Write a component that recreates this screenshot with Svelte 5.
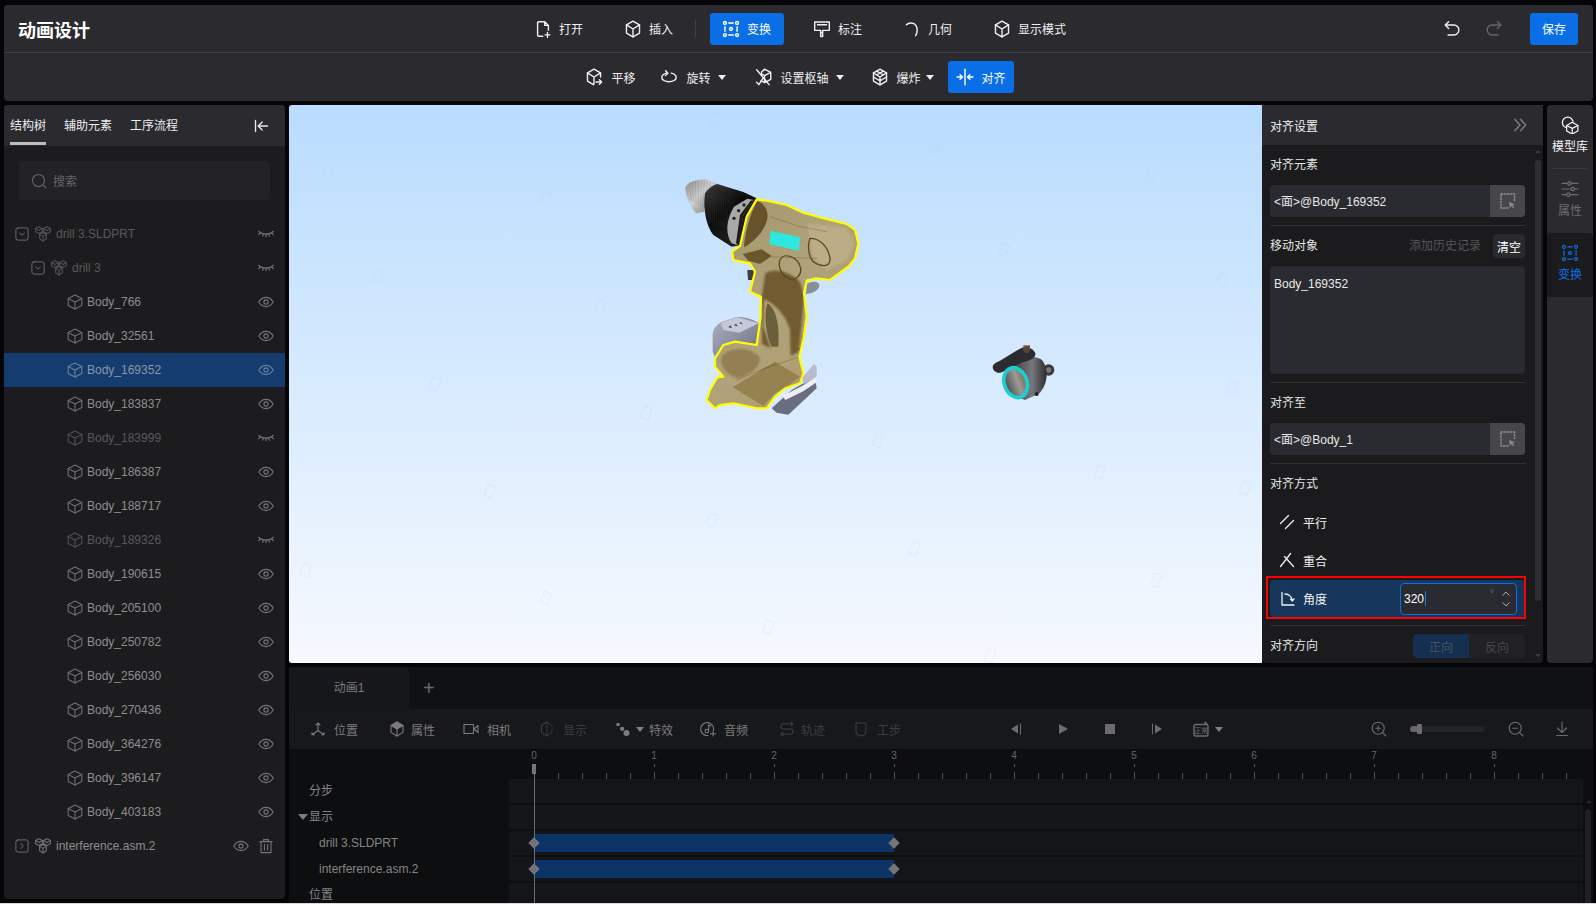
<script>
  const cube = '<path d="M8 1 14.8 4.6v6.8L8 15 1.2 11.4V4.6z"/><path d="M1.2 4.6 8 8l6.8-3.4M8 8v7"/>';
  const I = {
    open: '<path d="M9.5 1.5H4.2a1 1 0 0 0-1 1v11a1 1 0 0 0 1 1h3.6"/><path d="M9.5 1.5l3.3 3.3V9M9.5 1.5v3.3h3.3M12 11v4.4M9.8 13.2h4.4"/>',
    cube,
    insert: '<path d="M8 1 13.8 4.4v7.2L8 15l-5.8-3.4V4.4z"/><path d="M2.2 4.4 8 8l5.8-3.6M8 8v7"/>',
    transform: '<circle cx="2.6" cy="2.6" r="1.3"/><circle cx="13.4" cy="2.6" r="1.3"/><circle cx="2.6" cy="13.4" r="1.3"/><circle cx="13.4" cy="13.4" r="1.3"/><circle cx="8" cy="8" r="1.3"/><path d="M6 2.6h4M6 13.4h4M2.6 6v4M13.4 6v4"/>',
    mark: '<path d="M1.5 1.8h13v7.4H8.6v2.2H6.8v3.2H8.6v-3.2M1.5 1.8v7.4h5.3v2.2M4 4.2h8"/>',
    arc: '<path d="M3 4.2C5 2.2 9.6 1.8 11.6 5c1.5 2.4 1.2 6.4-.4 9"/>',
    undo: '<path d="M5 1.5 2 4.5l3 3"/><path d="M2.5 4.5h7.2a4.4 4.4 0 0 1 0 8.8H4.5"/>',
    redo: '<path d="M11 1.5 14 4.5l-3 3"/><path d="M13.5 4.5H6.3a4.4 4.4 0 0 0 0 8.8h5.2"/>',
    move: '<path d="M13.8 8V4.4L8 1 2.2 4.4v7.2L7.5 14.8"/><path d="M2.2 4.4 8 8l5.8-3.6M8 8v6.5"/><path d="M9.8 12.5h5M12.8 10.5l2 2-2 2"/>',
    rotate: '<path d="M5.8 4.6C3.4 5.2 1.6 6.6 1.6 8.4c0 2.2 2.9 3.8 6.4 3.8s6.4-1.6 6.4-3.8c0-1.8-1.9-3.2-4.4-3.8"/><path d="M5 2.4 7 4.6 4.8 6.6"/>',
    pivot: '<path d="M8.5 1 14 3.8v6.4L8.5 13 5.5 11.4M8.5 6.8 14 3.8M8.5 6.8V13M8.5 6.8 5.8 5.4V3.6L8.5 1"/><path d="M1.5 1.5l11 13.3M1.4 12.6l2 2.2L7.2 9"/>',
    explode: '<path d="M8 1 13.8 4.4v7.2L8 15l-5.8-3.4V4.4z"/><path d="M2.2 4.4 8 8l5.8-3.6M8 8v7M5 2.8 11 6.2M11 2.8 5 6.2M2.2 8 8 11.4 13.8 8"/>',
    align: '<path d="M8 1v14M1 8h4.4M3.6 6 5.8 8 3.6 10M15 8h-4.4M12.4 6 10.2 8l2.2 2"/>',
    collapse: '<path d="M2.5 2.5v11M14.5 8H5.5M9.2 4 5.2 8l4 4"/>',
    search: '<circle cx="7.5" cy="7.5" r="6"/><path d="M11.8 11.8 15 15"/>',
    down: '<rect x="1" y="1" width="14" height="14" rx="2.5"/><path d="M5.2 6.8 8 9.4l2.8-2.6"/>',
    right: '<rect x="1" y="1" width="14" height="14" rx="2.5"/><path d="M6.8 5.2 9.4 8l-2.6 2.8"/>',
    asm: '<path d="M4 .8 7.4 2.6v3.2L4 7.6.6 5.8V2.6zM12 .8l3.4 1.8v3.2L12 7.6 8.6 5.8V2.6zM8 6.6l3.4 1.8v4.4L8 15l-3.4-2.2V8.4z"/><path d="M.6 2.6 4 4.4l3.4-1.8M8.6 2.6 12 4.4l3.4-1.8M4.6 8.4 8 10.4l3.4-2M8 10.4V15"/>',
    eye: '<path d="M.8 8S3.6 3.4 8 3.4 15.2 8 15.2 8 12.4 12.6 8 12.6.8 8 .8 8z"/><circle cx="8" cy="8" r="2.1"/>',
    eyeoff: '<path d="M.8 5.4C3.8 8.8 12.2 8.8 15.2 5.4M2.2 7 .8 8.6M5.2 8.2 4.6 10.2M8 8.6v2M10.8 8.2l.6 2M13.8 7l1.4 1.6"/>',
    trash: '<path d="M1.8 3.6h12.4M5.6 3.6V1.6h4.8v2M3 3.6v11h10v-11M6.4 6.4v5.6M9.6 6.4v5.6"/>',
    pick: '<path stroke-dasharray="1.5 1.6" stroke-width="1.4" d="M1 1h13.5v7.5M8 15H1V1"/><path fill="currentColor" d="M9 9l6 2.2-2.4 1 1.6 2.4-1 .6-1.6-2.2L10 15z" stroke="none"/>',
    dbl: '<path d="M3 2.5 8 8l-5 5.5M8.6 2.5 13.6 8l-5 5.5"/>',
    lib: '<circle cx="6" cy="5.8" r="4.8"/><path fill="#2a2a2f" d="M10 5.6 15 8.4v5L10 16l-5-2.6v-5z"/><path d="M5 8.4 10 11l5-2.6M10 11v5"/>',
    sliders: '<path d="M1 3h5M9 3h6M1 8h8M12 8h3M1 13h4M8 13h7"/><circle cx="7.5" cy="3" r="1.5"/><circle cx="10.5" cy="8" r="1.5"/><circle cx="6.5" cy="13" r="1.5"/>',
    para: '<path d="M1.5 9.5 9.5 1.5M6.5 14.5l8-8"/>',
    coin: '<path d="M1.5 14.5 7 7.5 11.5 1.5M5.5 4.5l9 10"/>',
    angle: '<path d="M3 1.5V14h12"/><path d="M6 3c3.8-.2 7 2.8 7.4 7M13.4 10l-1.9-1.9M13.4 10l1.6-2.2"/>',
    axes: '<path d="M8 2v7.5M8 9.5 2.5 13.5M8 9.5l5.5 4M6 4l2-2 2 2M2 11.5v2.3h2.4M14 11.5v2.3h-2.4"/>',
    prop: '<path d="M8 1 14 4.6v6.8L8 15l-6-3.6V4.6z"/><path fill="currentColor" d="M8 8 2 4.6 8 1l6 3.6z"/><path d="M8 8v7"/>',
    cam: '<rect x="1" y="3.5" width="9.5" height="9"/><path d="M11 8l4-3.5v7z"/>',
    show: '<path d="M8 1 2.5 4.5v7L8 15"/><path d="M8 1v14" stroke-dasharray="2 1.5"/><path d="M8 1l5 3.5v7L8 15" opacity=".6"/>',
    fx: '<circle cx="3" cy="3.5" r="1.2" fill="currentColor"/><circle cx="7.2" cy="7.8" r="1.6" fill="currentColor"/><circle cx="11.5" cy="12" r="2.5" fill="currentColor"/>',
    audio: '<path d="M13.5 9.5A6.5 6.5 0 1 0 8 14.5"/><path d="M8.6 4v6"/><circle cx="6.8" cy="10" r="1.8"/><path d="M8.6 4l2.4 1M13 10.5v4.5M10.5 12.8h5"/>',
    track: '<path d="M14 2.8H4.5a2.6 2.6 0 0 0 0 5.2h7a2.6 2.6 0 0 1 0 5.2H2M12 1l2 1.8-2 1.8M4 11.4l-2 1.8 2 1.8"/>',
    step: '<path d="M3 2h10v8.5c0 2.5-3 4-5 4.5-2-.5-5-2-5-4.5z"/>',
    loop: '<rect x="1" y="3.5" width="14" height="11.5" rx="1.6" stroke-width="1.4"/><path d="M9 3.5h3V1l2.4 2.5" />',
    zin: '<circle cx="7.2" cy="7.2" r="6"/><path d="M11.6 11.6 15 15M7.2 4.8v4.8M4.8 7.2h4.8"/>',
    zout: '<circle cx="7.2" cy="7.2" r="6"/><path d="M11.6 11.6 15 15M4.8 7.2h4.8"/>',
    dl: '<path d="M8 1v10M3.4 7 8 11.5 12.6 7M2.5 14.5h11"/>',
    up: '<path d="M3 10 8 5l5 5"/>',
    dn: '<path d="M3 6l5 5 5-5"/>'
  };

  const tree = [
    { t: 'drill 3.SLDPRT', l: 0, dim: 1, off: 1, ic: 'asm', ch: 'down' },
    { t: 'drill 3', l: 1, dim: 1, off: 1, ic: 'asm', ch: 'down' },
    { t: 'Body_766', l: 2 },
    { t: 'Body_32561', l: 2 },
    { t: 'Body_169352', l: 2, sel: 1 },
    { t: 'Body_183837', l: 2 },
    { t: 'Body_183999', l: 2, dim: 1, off: 1 },
    { t: 'Body_186387', l: 2 },
    { t: 'Body_188717', l: 2 },
    { t: 'Body_189326', l: 2, dim: 1, off: 1 },
    { t: 'Body_190615', l: 2 },
    { t: 'Body_205100', l: 2 },
    { t: 'Body_250782', l: 2 },
    { t: 'Body_256030', l: 2 },
    { t: 'Body_270436', l: 2 },
    { t: 'Body_364276', l: 2 },
    { t: 'Body_396147', l: 2 },
    { t: 'Body_403183', l: 2 },
    { t: 'interference.asm.2', l: 0, ic: 'asm', ch: 'right', del: 1 }
  ];

  const marks = [[715,120],[933,148],[1151,176],[328,170],[546,198],[378,277],[600,306],[1004,250],[1222,280],[435,384],[646,413],[878,441],[1100,472],[1232,387],[490,491],[712,520],[914,549],[1156,580],[306,570],[546,598],[768,627],[990,656],[1245,488]];

  const labels = [
    { t: '分步', c: 'a' }, { t: '显示', c: 'a', caret: 1 }, { t: 'drill 3.SLDPRT', c: 'b' }, { t: 'interference.asm.2', c: 'b' }, { t: '位置', c: 'a' }
  ];
  const ticks = Array.from({ length: 44 }, (_, i) => i);
  const ribs = [0, 1, 2, 3, 4, 5, 6, 7];
  const knurl = Array.from({ length: 12 }, (_, i) => i);
</script>

{#snippet ic(name, cls = '')}
  <svg class="ic {cls}" viewBox="0 0 16 16" fill="none" stroke="currentColor" stroke-width="1.1" stroke-linecap="round" stroke-linejoin="round">{@html I[name]}</svg>
{/snippet}

<div class="app">
  <header class="top">
    <div class="row1">
      <div class="title">动画设计</div>
      <div class="cluster">
        <button class="tb">{@render ic('open')}<span>打开</span></button>
        <button class="tb">{@render ic('insert')}<span>插入</span></button>
        <i class="vsep"></i>
        <button class="tb on">{@render ic('transform')}<span>变换</span></button>
        <button class="tb">{@render ic('mark')}<span>标注</span></button>
        <button class="tb">{@render ic('arc')}<span>几何</span></button>
        <button class="tb">{@render ic('insert')}<span>显示模式</span></button>
      </div>
      <div class="actions">
        <span class="act">{@render ic('undo')}</span>
        <span class="act mute">{@render ic('redo')}</span>
        <button class="save">保存</button>
      </div>
    </div>
    <div class="row2">
      <button class="sb">{@render ic('move')}<span>平移</span></button>
      <button class="sb">{@render ic('rotate')}<span>旋转</span><i class="caret"></i></button>
      <button class="sb piv">{@render ic('pivot')}<span>设置枢轴</span><i class="caret"></i></button>
      <button class="sb exp">{@render ic('explode')}<span>爆炸</span><i class="caret c2"></i></button>
      <button class="sb on">{@render ic('align')}<span>对齐</span></button>
    </div>
  </header>

  <div class="main">
    <aside class="left">
      <div class="tabs">
        <span class="tab tabon">结构树</span>
        <span class="tab">辅助元素</span>
        <span class="tab">工序流程</span>
        <span class="coll">{@render ic('collapse')}</span>
      </div>
      <div class="search">{@render ic('search')}<span>搜索</span></div>
      <div class="tree">
        {#each tree as r}
          <div class="node l{r.l}" class:sel={r.sel} class:dim={r.dim}>
            {#if r.ch}<span class="chev">{@render ic(r.ch)}</span>{/if}
            <span class="nic">{@render ic(r.ic || 'cube')}</span>
            <span class="nm">{r.t}</span>
            <span class="tail">
              {@render ic(r.off ? 'eyeoff' : 'eye')}
              {#if r.del}<span class="tr">{@render ic('trash')}</span>{/if}
            </span>
          </div>
        {/each}
      </div>
    </aside>

    <div class="center">
      <div class="work">
        <section class="view">
          <svg class="scene" viewBox="289 105 973 558" preserveAspectRatio="none">
            <defs>
              <linearGradient id="nose" x1="0" y1="0" x2="1" y2="1"><stop offset="0" stop-color="#8c8c8c"/><stop offset=".45" stop-color="#cfcfcf"/><stop offset="1" stop-color="#6e6e6e"/></linearGradient>
              <linearGradient id="blk" x1="0" y1="0" x2=".6" y2="1"><stop offset="0" stop-color="#3a3a3a"/><stop offset=".5" stop-color="#0c0c0c"/><stop offset="1" stop-color="#222"/></linearGradient>
              <linearGradient id="tan" x1="0" y1="0" x2="1" y2="1"><stop offset="0" stop-color="#a3956a"/><stop offset=".5" stop-color="#b0a279"/><stop offset="1" stop-color="#ad9c6c"/></linearGradient>
              <linearGradient id="bat" x1="0" y1="0" x2="1" y2="1"><stop offset="0" stop-color="#aeb0c2"/><stop offset="1" stop-color="#6b6e82"/></linearGradient>
              <linearGradient id="part" x1="0" y1="0" x2="1" y2="0"><stop offset="0" stop-color="#2a2a2c"/><stop offset=".65" stop-color="#77787c"/><stop offset="1" stop-color="#2d2d30"/></linearGradient>
              <linearGradient id="hole" x1="0" y1="0" x2="1" y2="0"><stop offset="0" stop-color="#4a4a4c"/><stop offset=".6" stop-color="#9a9a98"/><stop offset="1" stop-color="#7c6a48"/></linearGradient>
              <filter id="soft" x="-20%" y="-20%" width="140%" height="140%"><feGaussianBlur stdDeviation="3.5"/></filter>
              <filter id="soft2" x="-20%" y="-20%" width="140%" height="140%"><feGaussianBlur stdDeviation="1.2"/></filter>
              <clipPath id="shell"><path d="M290 118 320 122 380 135 430 158 480 172 560 192 585 210 595 250 585 295 565 320 510 360 470 355 440 362 432 400 440 470 430 540 418 590 430 640 420 670 375 685 345 710 320 745 290 745 220 730 180 735 165 745 140 720 150 690 172 652 190 650 165 620 165 595 190 555 225 545 290 555 302 470 303 410 270 395 285 335 270 310 220 300 217 275 240 258 260 170Z"/></clipPath>
            </defs>
            {#each marks as m}
              <rect x={m[0] - 4} y={m[1] - 6} width="8" height="12" fill="none" stroke="#a9c4de" stroke-opacity=".22" stroke-width=".7" transform="rotate(20 {m[0]} {m[1]})"/>
            {/each}
            <g transform="translate(660 160) scale(.3333)">
              <path fill="url(#bat)" d="M158 522C160 505 172 492 185 486L232 470C255 470 285 480 298 490L296 560 190 552 168 600 158 575Z"/>
              <path fill="#c6c7d8" d="M182 490 232 472 296 490 238 518 190 510Z"/>
              <path fill="#3a3a44" d="M205 502l6-6 5 8zM222 496l6-5 5 8zM238 490l5-4 5 7z"/>
              <path fill="#6a6c80" d="M335 745 395 690 465 650 470 685 385 764 350 758Z"/>
              <path fill="#eeeef6" d="M368 708 430 676 470 648 468 668 430 694 376 720Z"/>
              <path fill="#b8bacd" d="M425 655 462 612 470 620 470 650 432 672Z"/>
              <path fill="#8b8d98" d="M440 372C455 362 478 362 478 376 478 392 455 402 438 402Z"/>
              <path fill="#3c3c44" d="M262 330h20v30h-18z"/>
              <path fill="url(#nose)" d="M76 84C80 68 110 58 135 58L172 72C150 90 135 125 132 155L108 160C92 140 76 108 76 84Z"/>
              <g stroke="#555" stroke-opacity=".28" stroke-width="2.4">
                {#each ribs as r}
                  <path d="M{88 + r * 9} {66 - r * .2}L{94 + r * 7} {122 + r * 4}"/>
                {/each}
              </g>
              <path fill="url(#blk)" d="M135 100C145 85 158 75 172 72L250 96 290 115 262 170 245 255 215 260 160 225C140 200 128 150 135 100Z"/>
              <g stroke="#4a4a4a" stroke-opacity=".35" stroke-width="1.6">
                {#each knurl as k}
                  <path d="M{142 + k * 7} {90 + k * 3}L{146 + k * 6} {190 + k * 2}"/>
                {/each}
              </g>
              <path fill="#a9a9a9" d="M222 140 262 116 282 120 250 165 232 255 215 250C198 225 195 185 222 140Z"/>
              <path fill="#1c1c1c" d="M240 165 272 122 282 120 250 165 236 255 228 250Z"/>
              <g fill="#222"><circle cx="222" cy="175" r="5"/><circle cx="236" cy="152" r="5"/><circle cx="252" cy="135" r="5"/></g>
              <path fill="url(#tan)" d="M290 118 320 122 380 135 430 158 480 172 560 192 585 210 595 250 585 295 565 320 510 360 470 355 440 362 432 400 440 470 430 540 418 590 430 640 420 670 375 685 345 710 320 745 290 745 220 730 180 735 165 745 140 720 150 690 172 652 190 650 165 620 165 595 190 555 225 545 290 555 302 470 303 410 270 395 285 335 270 310 220 300 217 275 240 258 260 170Z"/>
              <g clip-path="url(#shell)">
                <path filter="url(#soft2)" fill="#5e4b22" fill-opacity=".9" d="M292 124C312 130 326 150 322 175 318 205 290 240 252 262 255 220 270 160 292 124Z"/>
                <path filter="url(#soft2)" fill="#5f4a20" fill-opacity=".85" d="M248 282 305 268 335 288 300 312 265 302Z"/>
                <path filter="url(#soft)" fill="#6b5327" fill-opacity=".9" d="M316 340C340 325 385 330 420 365L432 410 425 490 416 575 392 588 390 510C380 470 345 430 312 418L310 500 332 565 306 552 304 420Z"/>
                <path filter="url(#soft2)" fill="#3d3116" fill-opacity=".6" d="M322 430C352 450 358 500 355 560L335 560C320 530 310 470 322 430Z"/>
                <path filter="url(#soft)" fill="#8a7444" fill-opacity=".75" d="M185 590C200 565 260 555 298 590 305 615 280 640 235 655 210 650 178 625 185 590Z"/>
                <path filter="url(#soft2)" fill="#8f7a48" fill-opacity=".8" d="M218 682 345 605 420 650 380 680 345 700 310 738Z"/>
                <path filter="url(#soft)" fill="#c8bc96" fill-opacity=".45" d="M440 190 560 205 585 250 560 300 500 330 460 290Z"/>
                <path fill="none" stroke="#5f4a20" stroke-width="4" d="M360 300C370 275 415 290 422 325 425 350 400 365 385 355 365 345 352 320 360 300ZM450 235C480 235 505 260 510 295 512 325 480 320 460 305 445 290 442 255 450 235Z"/>
                <path fill="none" stroke="#6e5e34" stroke-opacity=".6" stroke-width="2" d="M330 170 420 200 500 215M320 290 470 295M300 630 420 590M230 660 350 610M400 480 432 500M395 520 430 530M390 560 425 570"/>
              </g>
              <path fill="none" stroke="#ffff00" stroke-width="6.5" stroke-linejoin="round" d="M290 118 320 122 380 135 430 158 480 172 560 192 585 210 595 250 585 295 565 320 510 360 470 355 440 362 432 400 440 470 430 540 418 590 430 640 420 670 375 685 345 710 320 745 290 745 220 730 180 735 165 745 140 720 150 690 172 652 190 650 165 620 165 595 190 555 225 545 290 555 302 470 303 410 270 395 285 335 270 310 220 300 217 275 240 258 260 170Z"/>
              <path fill="#2ee8e0" d="M332 212 421 232 416 272 328 252Z"/>
            </g>
            <g transform="translate(970 330) scale(.3333)">
              <circle cx="236" cy="120" r="17" fill="#3a3a3c"/>
              <circle cx="236" cy="120" r="8" fill="#7a7a7c"/>
              <path fill="url(#part)" d="M105 118C135 85 195 68 218 92 238 122 232 168 205 192L165 210 118 192Z"/>
              <path fill="#2c2c30" d="M68 110C70 100 82 96 90 92L150 56C165 48 188 52 196 70 198 85 180 92 160 96L92 128C80 130 68 122 68 110Z"/>
              <path fill="#75512c" d="M160 46h20v14h-20z"/>
              <circle cx="170" cy="60" r="9" fill="#55453a"/>
              <ellipse cx="137" cy="158" rx="34" ry="46" transform="rotate(-20 137 158)" fill="url(#hole)" stroke="#19cfd4" stroke-width="11"/>
              <circle cx="200" cy="192" r="6" fill="#222"/>
            </g>
          </svg>
        </section>

        <section class="panel">
          <div class="phead"><span>对齐设置</span><span class="dbl">{@render ic('dbl')}</span></div>
          <div class="pbody">
            <div class="lab">对齐元素</div>
            <div class="field"><span>&lt;面&gt;@Body_169352</span><b class="pickb">{@render ic('pick')}</b></div>
            <div class="rule"></div>
            <div class="lab"><span>移动对象</span><span class="hist">添加历史记录</span><button class="clr">清空</button></div>
            <div class="area">Body_169352</div>
            <div class="rule"></div>
            <div class="lab">对齐至</div>
            <div class="field"><span>&lt;面&gt;@Body_1</span><b class="pickb">{@render ic('pick')}</b></div>
            <div class="rule"></div>
            <div class="lab">对齐方式</div>
            <div class="opt">{@render ic('para')}<span>平行</span></div>
            <div class="opt">{@render ic('coin')}<span>重合</span></div>
            <div class="opt act2">
              {@render ic('angle')}<span>角度</span>
              <div class="num"><span class="val">320</span><i class="cursor"></i><span class="deg">°</span><span class="spin">{@render ic('up')}{@render ic('dn')}</span></div>
            </div>
            <div class="rule"></div>
            <div class="lab"><span>对齐方向</span><div class="seg"><span class="s1">正向</span><span class="s2">反向</span></div></div>
            <div class="redbox"></div>
            <div class="pscroll"><i class="ua"></i><i class="thumb"></i><i class="da"></i></div>
          </div>
        </section>

        <nav class="rail">
          <div class="ri cur0">{@render ic('lib')}<span>模型库</span></div>
          <div class="ri-sep"></div>
          <div class="ri mu">{@render ic('sliders')}<span>属性</span></div>
          <div class="ri blue">{@render ic('transform')}<span>变换</span></div>
        </nav>
      </div>

      <section class="tl">
        <div class="tltabs"><span class="tltab">动画1</span><span class="plus">+</span></div>
        <div class="tlbar">
          <div class="g1">
            <span class="ti t1">{@render ic('axes')}<span>位置</span></span>
            <span class="ti g6">{@render ic('prop')}<span>属性</span></span>
            <span class="ti">{@render ic('cam')}<span>相机</span></span>
            <span class="ti off">{@render ic('show')}<span>显示</span></span>
            <span class="ti fxi">{@render ic('fx')}<i class="caret tc"></i><span>特效</span></span>
            <span class="ti t5">{@render ic('audio')}<span>音频</span></span>
            <span class="ti off g6 t6">{@render ic('track')}<span>轨迹</span></span>
            <span class="ti off">{@render ic('step')}<span>工步</span></span>
          </div>
          <div class="g2">
            <svg class="ic" viewBox="0 0 16 16"><path fill="currentColor" d="M10 3.5v9L3 8zM12 2.5h1v11h-1z"/></svg>
            <svg class="ic" viewBox="0 0 16 16"><path fill="currentColor" d="M4 3l9 5-9 5z"/></svg>
            <svg class="ic" viewBox="0 0 16 16"><rect fill="currentColor" x="3" y="3" width="10" height="10"/></svg>
            <svg class="ic" viewBox="0 0 16 16"><path fill="currentColor" d="M6 3.5v9L13 8zM3 2.5h1v11H3z"/></svg>
            <span class="lp">{@render ic('loop')}<em>正常</em><i class="caret tc"></i></span>
          </div>
          <div class="g3">
            {@render ic('zin')}
            <div class="slider"><i></i></div>
            {@render ic('zout')}
            <span class="dlb">{@render ic('dl')}</span>
          </div>
        </div>
        <div class="tlbody">
          <div class="labels">
            {#each labels as l}
              <div class="lb {l.c}">{#if l.caret}<i class="lcaret"></i>{/if}{l.t}</div>
            {/each}
          </div>
          <div class="tracks">
            <div class="ruler">
              {#each [0,1,2,3,4,5,6,7,8] as n}
                <span class="rn" style="left:{25 + n * 120}px">{n}</span>
                <i class="mj" style="left:{25 + n * 120}px"></i>
              {/each}
              {#each ticks as t}
                <i class="mn" style="left:{25 + t * 24}px"></i>
              {/each}
            </div>
            <div class="trow"></div>
            <div class="trow"></div>
            <div class="trow"><i class="bar"></i><i class="dia d1"></i><i class="dia d2"></i></div>
            <div class="trow"><i class="bar"></i><i class="dia d1"></i><i class="dia d2"></i></div>
            <div class="trow"></div>
            <i class="head"></i><i class="line"></i>
          </div>
          <div class="vs"><i class="vua"></i><i class="vth"></i></div>
        </div>
      </section>
    </div>
  </div>
  <div class="strip"></div>
</div>

<style>
  :global(body) {
    margin: 0;
    background: #050507;
    overflow: hidden;
    font-family: "Liberation Sans", "Noto Sans CJK SC", sans-serif;
    font-size: 12px;
  }
  * { box-sizing: border-box; }
  button { font: inherit; border: 0; background: none; color: inherit; padding: 0; }
  i, em, b { font-style: normal; font-weight: normal; }
  .ic { width: 16px; height: 16px; flex: none; display: block; }

  .app { width: 1596px; height: 904px; display: flex; flex-direction: column; padding: 5px 3px 0 4px; gap: 4px; position: relative; overflow: hidden; }
  .strip { position: absolute; left: 0; right: 0; bottom: 0; height: 1px; background: #d8d8d8; }

  .top { height: 96px; flex: none; background: #2a2a2f; border-radius: 4px; color: #f0f0f0; }
  .top .tb :global(svg), .top .sb :global(svg), .act :global(svg) { width: 18px; height: 18px; margin: -1px; stroke-width: 1.25; }
  .row1 { height: 48px; border-bottom: 1px solid #3f3f44; display: flex; align-items: center; padding-left: 14px; }
  .title { width: 505px; font-size: 18px; font-weight: 700; color: #fff; flex: none; }
  .cluster { display: flex; align-items: center; gap: 18px; }
  .tb { height: 32px; display: flex; align-items: center; gap: 8px; padding: 0 12px; border-radius: 3px; white-space: nowrap; }
  .tb.on { background: #0a6fe6; padding: 0 13px; color: #fff; margin: 0 0 0 -1px; }
  .vsep { width: 1px; height: 17px; background: #414146; margin: 0 -3px 0 -8px; }
  .actions { margin-left: auto; display: flex; align-items: center; padding-right: 15px; }
  .act { width: 16px; margin-right: 26px; }
  .act.mute { color: #66666b; margin-right: 28px; }
  .save { width: 48px; height: 32px; background: #0a6fe6; border-radius: 3px; color: #fff; }
  .row2 { height: 48px; display: flex; align-items: center; justify-content: center; padding-left: 3px; gap: 26px; }
  .sb { height: 32px; display: flex; align-items: center; gap: 9px; white-space: nowrap; }
  .piv { margin-left: 4px; }
  .exp { margin-left: 2px; }
  .sb.on { background: #0a6fe6; width: 66px; padding-left: 9px; border-radius: 3px; color: #fff; margin-left: -12px; }
  .caret { width: 0; height: 0; border: 4px solid transparent; border-top: 5px solid currentColor; border-bottom: 0; margin-left: -2px; }
  .c2 { margin-left: -4px; }

  .main { flex: 1; min-height: 0; display: flex; gap: 4px; }
  .left { width: 281px; flex: none; margin-bottom: 5px; background: #1c1c1e; border-radius: 4px; overflow: hidden; color: #8a8a8a; }
  .tabs { height: 41px; background: #2a2a2f; display: flex; align-items: center; padding-left: 6px; gap: 18px; color: #eee; }
  .tab { position: relative; height: 41px; line-height: 43px; white-space: nowrap; }
  .tabon::after { content: ""; position: absolute; left: 0; right: 0; bottom: 1px; height: 3px; background: #bdbdbd; }
  .coll { margin-left: auto; margin-right: 16px; color: #e6e6e6; }
  .coll :global(svg) { stroke-width: 1.4; }
  .search { margin: 15px 15px 17px; height: 39px; background: #232325; border-radius: 4px; display: flex; align-items: center; gap: 6px; padding-left: 12px; color: #66666a; }
  .tree { display: flex; flex-direction: column; }
  .node { height: 34px; display: flex; align-items: center; padding-right: 11px; color: #8e8e8e; white-space: nowrap; }
  .node.dim { color: #58585a; }
  .node.sel { background: #143c6e; color: #8b97a8; }
  .l0 { padding-left: 11px; }
  .l1 { padding-left: 27px; }
  .l2 { padding-left: 63px; }
  .chev { width: 14px; height: 14px; margin-right: 6px; color: #6e6e70; }
  .chev :global(svg) { width: 14px; height: 14px; }
  .nic { margin-right: 5px; color: #6e6e70; }
  .l2 .nic { margin-right: 4px; }
  .dim .nic { color: #505052; }
  .sel .nic, .sel .tail { color: #6e7f96; }
  .tail { margin-left: auto; display: flex; align-items: center; color: #757577; }
  .dim .tail { color: #7e7e80; }
  .tr { margin-left: 9px; }

  .center { flex: 1; min-width: 0; display: flex; flex-direction: column; gap: 4px; }
  .work { height: 558px; flex: none; display: flex; }
  .view { width: 973px; flex: none; background: linear-gradient(#b9dcfe, #f6f9fe); position: relative; border-radius: 3px 0 0 3px; overflow: hidden; }
  .scene { position: absolute; inset: 0; width: 100%; height: 100%; }

  .panel { width: 281px; flex: none; background: #1b1b1d; color: #e6e6e6; border-radius: 0 0 4px 4px; overflow: hidden; display: flex; flex-direction: column; }
  .phead { height: 40px; flex: none; background: #2a2a2f; display: flex; align-items: center; justify-content: space-between; padding: 0 15px 0 8px; color: #f2f2f2; }
  .dbl { color: #77777b; }
  .dbl :global(svg) { stroke-width: 1.7; }
  .pbody { flex: 1; min-height: 0; padding: 0 18px 0 8px; position: relative; overflow: hidden; }
  .lab { height: 40px; display: flex; align-items: center; padding-bottom: 3px; }
  .hist { margin-left: auto; color: #565658; margin-right: 12px; }
  .clr { width: 32px; height: 24px; background: #29292e; border-radius: 4px; color: #fff; margin-top: 3px; }
  .field { height: 32px; background: #2a2b30; border-radius: 4px; display: flex; align-items: center; padding-left: 4px; overflow: hidden; color: #e8e8e8; }
  .field > span { margin-top: -2px; }
  .pickb { margin-left: auto; width: 35px; height: 32px; background: #47474a; display: flex; align-items: center; justify-content: center; color: #8c8c8c; }
  .rule { height: 1px; background: #313134; margin-top: 8px; }
  .area { height: 108px; background: #2a2b30; border-radius: 4px; padding: 10px 4px; line-height: 16px; color: #e8e8e8; }
  .opt { height: 38px; display: flex; align-items: center; gap: 8px; padding: 0 0 2px 9px; color: #f0f0f0; }
  .opt :global(svg) { stroke-width: 1.3; }
  .opt.act2 { background: #17365c; border-radius: 4px; height: 37px; margin-bottom: 1px; padding-bottom: 0; position: relative; }
  .num { margin-left: auto; margin-right: 8px; width: 117px; height: 32px; border: 1px solid #0a6fe6; border-radius: 4px; background: #2a2b30; display: flex; align-items: center; padding-left: 3px; color: #fff; }
  .cursor { width: 1px; height: 15px; background: #0a80f0; margin-left: 1px; }
  .deg { margin-left: auto; color: #666; font-size: 10px; align-self: flex-start; margin-top: 4px; }
  .spin { display: flex; flex-direction: column; width: 10px; margin: 0 5px 0 7px; color: #d0d0d0; }
  .spin :global(svg) { width: 10px; height: 10px; }
  .seg { margin-left: auto; display: flex; width: 112px; height: 24px; border-radius: 4px; overflow: hidden; margin-top: 3px; }
  .seg span { flex: 1; display: flex; align-items: center; justify-content: center; }
  .s1 { background: #142f50; color: #46525f; }
  .s2 { background: #212123; color: #474749; }
  .redbox { position: absolute; left: 4px; top: 431px; width: 260px; height: 43px; border: 2px solid #f00; pointer-events: none; }
  .pscroll { position: absolute; right: 2px; top: 0; bottom: 0; width: 6px; }
  .ua, .da { position: absolute; left: 0; width: 0; height: 0; border: 3px solid transparent; }
  .ua { top: 5px; border-bottom: 3px solid #3c3c40; border-top: 0; }
  .da { bottom: 6px; border-top: 3px solid #3c3c40; border-bottom: 0; }
  .thumb { position: absolute; top: 15px; height: 441px; left: 0; right: 0; background: #2f2f33; border-radius: 3px; }

  .rail { width: 46px; margin-left: 4px; flex: none; background: #2a2a2f; border-radius: 4px; display: flex; flex-direction: column; align-items: center; overflow: hidden; }
  .ri { width: 100%; display: flex; flex-direction: column; align-items: center; gap: 3px; }
  .ri :global(svg) { width: 18px; height: 18px; }
  .cur0 { padding-top: 11px; color: #f5f5f5; height: 63px; }
  .ri-sep { width: 34px; height: 1px; background: #3a3a3e; flex: none; }
  .mu { color: #6d6d70; padding-top: 11px; height: 64px; }
  .blue { color: #0a6fe6; background: #1b1b1d; border-radius: 4px 4px 0 0; height: 64px; padding-top: 11px; }

  .tl { flex: 1; min-height: 0; background: #101114; display: flex; flex-direction: column; overflow: hidden; color: #7c7c7e; }
  .tltabs { height: 42px; flex: none; display: flex; align-items: center; }
  .tltab { width: 120px; height: 100%; background: #16171a; display: flex; align-items: center; justify-content: center; border-radius: 3px 3px 0 0; padding-bottom: 3px; }
  .plus { margin-left: 14px; font-size: 20px; font-weight: 300; color: #6a6a6c; }
  .tlbar { height: 40px; flex: none; background: #17181b; display: flex; align-items: center; }
  .g1 { display: flex; align-items: center; gap: 28px; padding-left: 21px; white-space: nowrap; }
  .ti { display: flex; align-items: center; gap: 8px; }
  .t1 { margin-right: 3px; }
  .fxi { gap: 5px; }
  .t5 { margin-left: -1px; }
  .t6 { margin-left: 3px; }
  .g6 { gap: 6px; }
  .ti.off { color: #3d3d40; }
  .tc { margin: 0; color: #808082; }
  .g2 { display: flex; align-items: center; gap: 31px; margin-left: 107px; color: #6c6c6e; }
  .lp { display: flex; align-items: center; gap: 6px; position: relative; margin-left: -3px; }
  .lp em { position: absolute; left: 1px; top: 5px; font-size: 7px; width: 14px; text-align: center; line-height: 9px; white-space: nowrap; }
  .g3 { margin-left: auto; padding-right: 23px; display: flex; align-items: center; color: #6c6c6e; }
  .slider { width: 75px; height: 6px; background: #232427; border-radius: 3px; margin: 0 23px; position: relative; }
  .slider i { position: absolute; left: 0; top: 0; height: 6px; width: 11px; background: #666; border-radius: 3px 0 0 3px; }
  .slider i::after { content: ""; position: absolute; left: 7px; top: -2px; width: 5px; height: 10px; background: #6e6e70; border-radius: 1px; }
  .dlb { margin-left: 30px; }

  .tlbody { flex: 1; min-height: 0; display: flex; background: #0d0e10; }
  .labels { width: 220px; flex: none; padding-top: 30px; color: #858587; }
  .lb { height: 26px; line-height: 24px; white-space: nowrap; }
  .lb.a { padding-left: 20px; position: relative; }
  .lb.b { padding-left: 30px; }
  .lcaret { position: absolute; left: 9px; top: 9px; width: 0; height: 0; border: 5px solid transparent; border-top: 6px solid #7c7c7e; border-bottom: 0; }
  .tracks { flex: 1; min-width: 0; position: relative; }
  .ruler { height: 30px; position: relative; overflow: hidden; }
  .rn { position: absolute; top: 1px; transform: translateX(-50%); font-size: 10px; line-height: 12px; color: #666; }
  .mj { position: absolute; top: 15px; width: 1px; height: 12px; background: repeating-linear-gradient(#555 0 3px, transparent 3px 8px); }
  .mn { position: absolute; top: 24px; width: 1px; height: 6px; background: #515153; }
  .trow { height: 24px; margin-bottom: 2px; background: #141518; position: relative; }
  .bar { position: absolute; left: 25px; width: 360px; top: 3px; height: 18px; background: #0c3468; }
  .dia { position: absolute; top: 8px; width: 8px; height: 8px; background: #767678; transform: rotate(45deg); }
  .d1 { left: 21px; }
  .d2 { left: 381px; }
  .head { position: absolute; left: 23px; top: 15px; width: 4px; height: 10px; background: #777; }
  .line { position: absolute; left: 24.5px; top: 20px; bottom: 0; width: 1px; background: #6e6e70; }
  .vs { width: 10px; flex: none; position: relative; }
  .vua { position: absolute; left: 3px; top: 51px; width: 0; height: 0; border: 3px solid transparent; border-bottom: 3px solid #26272a; border-top: 0; }
  .vth { position: absolute; left: 2px; top: 60px; width: 6px; bottom: 0; background: #1f2023; border-radius: 3px; }
</style>
